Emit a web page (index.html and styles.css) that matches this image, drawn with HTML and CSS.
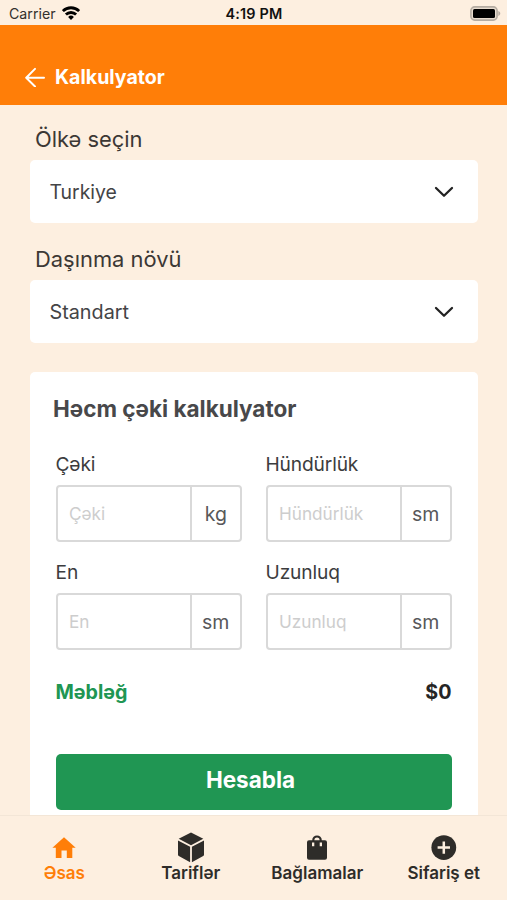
FILE: index.html
```html
<!DOCTYPE html>
<html lang="az">
<head>
<meta charset="utf-8">
<title>Kalkulyator</title>
<link rel="stylesheet" href="styles.css">
</head>
<body>
<div class="app">
  <div class="status">
    <div class="carrier"><span class="carrier-name">Carrier</span>
      <svg width="18" height="14" viewBox="0 0 18 14"><g fill="none" stroke="#000" stroke-width="2.8"><path d="M.9 5.1a11.5 11.5 0 0 1 16.2 0"/><path d="M3.9 8.6a7.2 7.2 0 0 1 10.2 0"/></g><path d="M6.1 11a4.2 4.2 0 0 1 5.8 0L9 14z"/></svg>
    </div>
    <span class="time">4:19 PM</span>
    <svg class="battery" width="31" height="15" viewBox="0 0 31 15"><rect x=".9" y=".9" width="26.2" height="13.2" rx="3.8" fill="#e8dccf" stroke="#b5aca2" stroke-width="1.6"/><rect x="3" y="3" width="22" height="9" rx="1.5"/><path d="M28.3 5.1c2.6.8 2.6 4 0 4.8z" fill="#b5aca2"/></svg>
  </div>
  <header class="header">
    <svg width="20" height="20" viewBox="0 0 20 20" fill="none" stroke="#fff" stroke-width="2" stroke-linecap="round" stroke-linejoin="round"><path d="M19 10.7H1.3M10 1.9 1.2 10.7l8.8 8.8"/></svg>
    <h1 class="header-title">Kalkulyator</h1>
  </header>
  <main class="content">
    <div class="label">Ölkə seçin</div>
    <div class="select"><span class="turkiye">Turkiye</span><svg width="20" height="12" viewBox="0 0 20 12"><path d="m2 2 8 7.8L18 2"/></svg></div>
    <div class="label">Daşınma növü</div>
    <div class="select"><span class="standart">Standart</span><svg width="20" height="12" viewBox="0 0 20 12"><path d="m2 2 8 7.8L18 2"/></svg></div>
    <section class="card">
      <h2 class="card-title">Həcm çəki kalkulyator</h2>
      <div class="fields">
        <div class="field"><div class="field-label">Çəki</div><div class="box"><span class="hint">Çəki</span><span class="unit">kg</span></div></div>
        <div class="field"><div class="field-label">Hündürlük</div><div class="box"><span class="hint">Hündürlük</span><span class="unit">sm</span></div></div>
        <div class="field"><div class="field-label">En</div><div class="box"><span class="hint">En</span><span class="unit">sm</span></div></div>
        <div class="field"><div class="field-label">Uzunluq</div><div class="box"><span class="hint">Uzunluq</span><span class="unit">sm</span></div></div>
      </div>
      <div class="total"><span class="total-name">Məbləğ</span><span class="total-value">$0</span></div>
      <div class="button">Hesabla</div>
    </section>
  </main>
  <nav class="tabs">
    <div class="tab active"><svg width="30" height="30" viewBox="0 0 30 30"><path d="M15 5.2 26.7 15.7h-3.4V26h-5.5v-7.5h-5.3V26H6.8V15.7H3.4z"/></svg><span>Əsas</span></div>
    <div class="tab"><svg width="30" height="30" viewBox="0 0 30 30"><path d="M15 .4 27.3 6.7 15 13.2 2.7 6.7zM2 8.4l12.1 6.4v15.4L2.8 24.1a1.5 1.5 0 0 1-.8-1.3zM28 8.4l-12.1 6.4v15.4l11.3-6.1a1.5 1.5 0 0 0 .8-1.3z"/></svg><span>Tariflər</span></div>
    <div class="tab"><svg width="30" height="30" viewBox="0 0 30 30"><path fill-rule="evenodd" d="M10.2 8.2a4.8 4.8 0 0 1 9.6 0H23a2 2 0 0 1 2 2v15.6a2 2 0 0 1-2 2H7a2 2 0 0 1-2-2V10.2a2 2 0 0 1 2-2zm2.2 0h5.2a2.6 2.6 0 0 0-5.2 0zM10 10.6v3.6h2.3v-3.6zm7.7 0v3.6H20v-3.6z"/></svg><span>Bağlamalar</span></div>
    <div class="tab"><svg width="30" height="30" viewBox="0 0 30 30"><circle cx="14.8" cy="15.6" r="12.4"/><path d="M14.8 9.4v12.4M8.6 15.6H21" stroke="#fdefe0" stroke-width="2.5"/></svg><span>Sifariş et</span></div>
  </nav>
</div>
</body>
</html>
```
FILE: styles.css
```css
* { box-sizing: border-box; }
body { margin: 0; font-family: Inter, "Liberation Sans", sans-serif; color: #3c3835; background: #fdefe0; }
h1, h2 { margin: 0; }
svg { display: block; flex: none; }
.app { height: 900px; display: flex; flex-direction: column; overflow: hidden; background: #fdefe0; }
.status { height: 25px; flex: none; display: grid; grid-template-columns: 1fr auto 1fr; align-items: center; padding: 2px 6px 0 9px; color: #111; }
.carrier { display: flex; align-items: center; gap: 6px; }
.carrier svg { margin-top: -2px; }
.carrier-name { font-size: 14.2px; color: #33302c; }
.time { font-size: 14.4px; font-weight: 600; letter-spacing: .2px; margin-right: 2px; }
.battery { justify-self: end; margin-top: -1px; }
.header { height: 80px; flex: none; background: #ff7e08; display: flex; align-items: center; gap: 10px; padding: 24px 25px 0; color: #fff; }
.header-title { font-size: 19.6px; line-height: 24px; font-weight: 700; }
.content { flex: 1; min-height: 0; overflow: hidden; padding: 20px 29.5px 0 30px; }
.label { font-size: 21.9px; line-height: 28px; padding-left: 5px; margin-bottom: 7px; }
.select { height: 63px; background: #fff; border-radius: 5px; margin-bottom: 22px; display: flex; align-items: center; justify-content: space-between; padding: 0 24px 0 19.5px; font-size: 20px; color: #444446; }
.turkiye { font-size: 19.4px; }
.standart { font-size: 19.8px; }
.select svg { fill: none; stroke: #222; stroke-width: 2.3; stroke-linecap: round; stroke-linejoin: round; }
.card { background: #fff; border-radius: 5px; margin-top: 29px; height: 500px; padding: 23px 26px 0 25.5px; }
.card-title { font-size: 22.5px; line-height: 28px; font-weight: 700; color: #48484a; margin-left: -2.5px; white-space: nowrap; }
.fields { display: grid; grid-template-columns: 1fr 1fr; column-gap: 24px; row-gap: 18px; margin-top: 29px; }
.field-label { font-size: 19.2px; letter-spacing: -.15px; line-height: 24px; color: #3c3c3e; margin-bottom: 9px; }
.box { height: 57px; border: 2px solid #d9d9d9; border-radius: 4px; display: flex; }
.hint { flex: 1; display: flex; align-items: center; padding-left: 11.5px; font-size: 17.2px; color: #cdcdcd; }
.unit { width: 49.5px; flex: none; border-left: 2px solid #d9d9d9; display: flex; align-items: center; justify-content: center; font-size: 19.5px; color: #58585a; }
.total { display: flex; justify-content: space-between; margin-top: 30px; font-size: 19.7px; line-height: 24px; font-weight: 700; }
.total-name { color: #209653; }
.total-value { color: #252525; }
.button { margin-top: 50px; height: 56px; border-radius: 5px; background: #209653; color: #fff; font-size: 22.5px; line-height: 51px; font-weight: 700; text-align: center; padding-right: 6px; }
.tabs { height: 85px; flex: none; border-top: 1px solid #f3e6d7; display: grid; grid-template-columns: repeat(4, 1fr); padding: 16px 0 0 1px; color: #2e2c29; }
.tab { display: flex; flex-direction: column; align-items: center; font-size: 17px; line-height: 22px; font-weight: 600; white-space: nowrap; }
.tab svg { fill: currentColor; overflow: visible; }
.active { color: #ff7e08; }
```
